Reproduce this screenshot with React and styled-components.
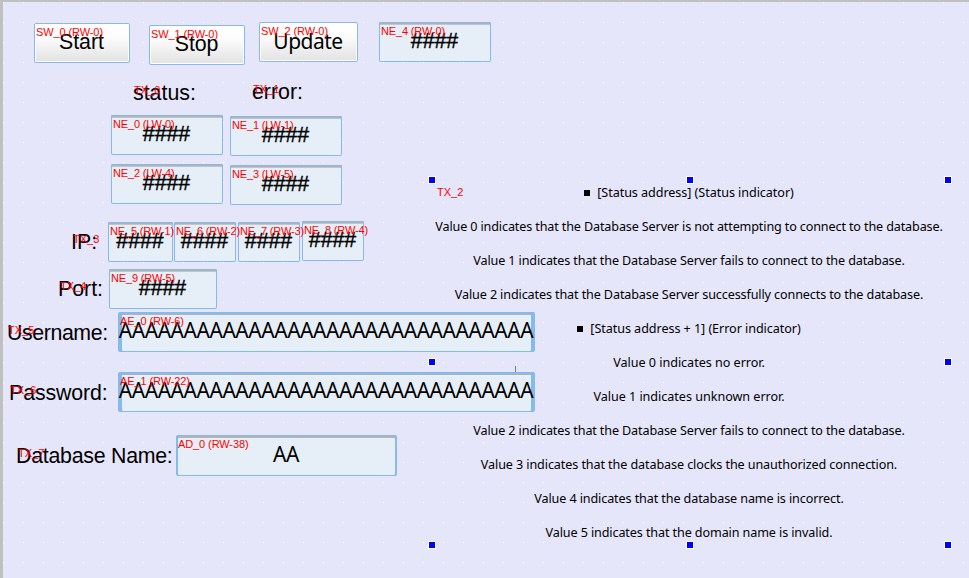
import React from "react";
import styled, { createGlobalStyle, css } from "styled-components";

const GlobalStyle = createGlobalStyle`
  * { box-sizing: border-box; }
  body { margin: 0; overflow: hidden; }
`;

const blue = "#86b9ec";
const arial = `"Liberation Sans", Arial, sans-serif`;
const noto = `"Noto Sans", "Open Sans", sans-serif`;

const Canvas = styled.main`
  position: relative;
  width: 969px;
  height: 578px;
  overflow: hidden;
  border-left: 3px solid #c0c0c0;
  border-top: 2px solid #c0c0c0;
  background-color: #e6e6fa;
  background-image: conic-gradient(from 270deg at 1px 1px, #fff 90deg, transparent 90deg);
  background-size: 20px 20px;
  color: #000;
`;

const Form = styled.div`
  display: flex;
  flex-direction: column;
  padding-top: 20px;
`;

const Row = styled.div`
  display: flex;
  align-items: flex-start;
  flex: none;
  height: ${(p) => p.$height}px;
  padding-left: ${(p) => p.$indent}px;
`;

const FieldGrid = styled.div`
  display: grid;
  grid-template-columns: repeat(2, 112px);
  column-gap: 7px;
  grid-auto-rows: 49px;
  height: 106px;
  padding-left: 108px;
`;

const placed = css`
  position: relative;
  flex: none;
  margin-left: ${(p) => p.$lead || 0}px;
  margin-top: ${(p) => p.$drop || 0}px;
  width: ${(p) => p.$width}px;
`;

const Caption = styled.div`
  ${placed}
  font: 21.33px/24px ${arial};
  letter-spacing: ${(p) => p.$track || 0}px;
  white-space: nowrap;
`;

const Tag = styled.span`
  position: absolute;
  z-index: 1;
  left: ${(p) => p.$x}px;
  top: ${(p) => p.$y}px;
  font: 11px/12px ${arial};
  letter-spacing: ${(p) => p.$track || 0}px;
  color: #f00;
  white-space: nowrap;
`;

const Box = styled.div`
  ${placed}
  display: flex;
  justify-content: center;
  height: ${(p) => p.$height || 40}px;
  padding-top: 7px;
  border-radius: 2px;
`;

const PushButton = styled(Box)`
  border: 1px solid ${blue};
  padding-top: 6px;
  background: linear-gradient(#fff 0%, #fcfcfc 35%, #e2e2e2 100%);
  box-shadow: inset 0 0 0 1px #fff;
`;

const NumericField = styled(Box)`
  background: #e6eff7;
  box-shadow: inset 0 0 0 1px ${blue}, inset 0 2px 0 #b0b2b4, inset 0 3px 0 #c2c6ca;
`;

const TextField = styled(Box)`
  background: #e6eff7;
  border-radius: 3px;
  box-shadow: inset ${(p) => p.$side}px 0 0 ${blue}, inset -${(p) => p.$side}px 0 0 ${blue},
    inset 0 ${(p) => (p.$side > 2 ? 2 : 1)}px 0 ${blue}, inset 0 -1px 0 ${blue}, inset 0 3px 0 #b2b4b6;
`;

const Value = styled.span`
  font: ${(p) => (p.$noto ? `21px/24px ${noto}` : `21.33px/24px ${arial}`)};
  letter-spacing: ${(p) => p.$track || 0}px;
  margin-left: ${(p) => p.$nudge || 0}px;
  margin-top: ${(p) => p.$lift || 0}px;
  white-space: nowrap;
`;

const Digits = styled(Value)`
  -webkit-text-stroke: 0.4px #000;
`;

const Notes = styled.section`
  position: absolute;
  left: 429px;
  top: 178px;
  width: 516px;
  height: 365px;
  font: 12.6px/34px ${noto};
`;

const NoteLine = styled.div`
  display: flex;
  justify-content: center;
  align-items: center;
  height: 34px;
  margin-top: ${(p) => (p.$first ? -4 : 0)}px;
  letter-spacing: ${(p) => p.$track || 0}px;
  padding-right: 2px;
  white-space: nowrap;
`;

const Bullet = styled.i`
  width: 6px;
  height: 6px;
  margin-right: 7px;
  background: #000;
`;

const Handle = styled.i`
  position: absolute;
  left: ${(p) => p.$x}px;
  top: ${(p) => p.$y}px;
  width: 8px;
  height: 8px;
  border: 1px solid #fff;
  background: #00f;
`;

const Tick = styled.i`
  position: absolute;
  left: 83px;
  top: 186px;
  width: 1px;
  height: 6px;
  background: #808080;
`;

function Numeric({ tag, ...place }) {
  return (
    <NumericField {...place}>
      <Digits $nudge={-1}>####</Digits>
      <Tag $x={2} $y={3} $track={-0.15}>{tag}</Tag>
    </NumericField>
  );
}

const LONG = "A".repeat(32);

const NOTES = [
  { text: "[Status address] (Status indicator)", bullet: true, track: -0.06 },
  { text: "Value 0 indicates that the Database Server is not attempting to connect to the database.", track: -0.135 },
  { text: "Value 1 indicates that the Database Server fails to connect to the database.", track: -0.13 },
  { text: "Value 2 indicates that the Database Server successfully connects to the database.", track: -0.12 },
  { text: "[Status address + 1] (Error indicator)", bullet: true, track: -0.06 },
  { text: "Value 0 indicates no error.", track: -0.03 },
  { text: "Value 1 indicates unknown error.", track: -0.03 },
  { text: "Value 2 indicates that the Database Server fails to connect to the database.", track: -0.13 },
  { text: "Value 3 indicates that the database clocks the unauthorized connection.", track: -0.1 },
  { text: "Value 4 indicates that the database name is incorrect.", track: -0.11 },
  { text: "Value 5 indicates that the domain name is invalid.", track: -0.11 },
];

const HANDLES = [
  [-4, -4], [254, -4], [512, -4],
  [-4, 178], [512, 178],
  [-4, 361], [254, 361], [512, 361],
];

export default function App() {
  return (
    <>
      <GlobalStyle />
      <Canvas>
        <Form>
          <Row $height={58} $indent={31}>
            <PushButton $width={96} $drop={1}>
              <Value $nudge={-1}>Start</Value>
              <Tag $x={1} $y={2} $track={-0.1}>SW_0 (RW-0)</Tag>
            </PushButton>
            <PushButton $width={96} $lead={19} $drop={3}>
              <Value $nudge={-1} $track={-0.1}>Stop</Value>
              <Tag $x={1} $y={2} $track={-0.1}>SW_1 (RW-0)</Tag>
            </PushButton>
            <PushButton $width={99} $lead={14}>
              <Value $noto $track={-0.5} $nudge={-1}>Update</Value>
              <Tag $x={1} $y={2} $track={-0.1}>SW_2 (RW-0)</Tag>
            </PushButton>
            <Numeric tag="NE_4 (RW-0)" $width={112} $lead={21} />
          </Row>
          <Row $height={35} $indent={130}>
            <Caption $width={119} $drop={1}>
              status:
              <Tag $x={1} $y={3}>TX_0</Tag>
            </Caption>
            <Caption $width={60}>
              error:
              <Tag $x={1} $y={3}>TX_1</Tag>
            </Caption>
          </Row>
          <FieldGrid>
            <Numeric tag="NE_0 (LW-0)" $width={112} />
            <Numeric tag="NE_1 (LW-1)" $width={112} $drop={1} />
            <Numeric tag="NE_2 (LW-4)" $width={112} />
            <Numeric tag="NE_3 (LW-5)" $width={112} $drop={1} />
          </FieldGrid>
          <Row $height={48} $indent={68}>
            <Caption $width={37} $drop={9}>
              IP:
              <Tag $x={2} $y={3}>TX_3</Tag>
            </Caption>
            <Numeric tag="NE_5 (RW-1)" $width={65} $drop={1} />
            <Numeric tag="NE_6 (RW-2)" $width={62} $lead={1} $drop={1} />
            <Numeric tag="NE_7 (RW-3)" $width={62} $lead={2} $drop={1} />
            <Numeric tag="NE_8 (RW-4)" $width={62} $lead={2} />
          </Row>
          <Row $height={43} $indent={55}>
            <Caption $width={51} $drop={8}>
              Port:
              <Tag $x={2} $y={3}>TX_4</Tag>
            </Caption>
            <Numeric tag="NE_9 (RW-5)" $width={108} />
          </Row>
          <Row $height={60} $indent={4}>
            <Caption $width={111} $drop={9} $track={-0.4}>
              Username:
              <Tag $x={1} $y={3}>TX_5</Tag>
            </Caption>
            <TextField $width={417} $side={4}>
              <Value $noto $track={-0.47} $lift={-1} $nudge={-1}>{LONG}</Value>
              <Tag $x={2} $y={3} $track={-0.1}>AE_0 (RW-6)</Tag>
            </TextField>
          </Row>
          <Row $height={63} $indent={6}>
            <Caption $width={109} $drop={9} $track={-0.1}>
              Password:
              <Tag $x={1} $y={3}>TX_6</Tag>
            </Caption>
            <TextField $width={417} $side={4}>
              <Value $noto $track={-0.47} $lift={-1} $nudge={-1}>{LONG}</Value>
              <Tag $x={2} $y={3} $track={-0.1}>AE_1 (RW-22)</Tag>
            </TextField>
          </Row>
          <Row $height={60} $indent={13}>
            <Caption $width={160} $drop={9} $track={-0.25}>
              Database Name:
              <Tag $x={2} $y={3}>TX_7</Tag>
            </Caption>
            <TextField $width={221} $height={41} $side={2}>
              <Value $noto $track={-0.47} $nudge={-1}>AA</Value>
              <Tag $x={2} $y={3} $track={-0.1}>AD_0 (RW-38)</Tag>
            </TextField>
          </Row>
        </Form>
        <Notes>
          {NOTES.map((n, i) => (
            <NoteLine key={i} $first={i === 0} $track={n.track}>
              {n.bullet && <Bullet />}
              {n.text}
            </NoteLine>
          ))}
          <Tag $x={5} $y={6}>TX_2</Tag>
          {HANDLES.map(([x, y]) => (
            <Handle key={`${x},${y}`} $x={x} $y={y} />
          ))}
          <Tick />
        </Notes>
      </Canvas>
    </>
  );
}
